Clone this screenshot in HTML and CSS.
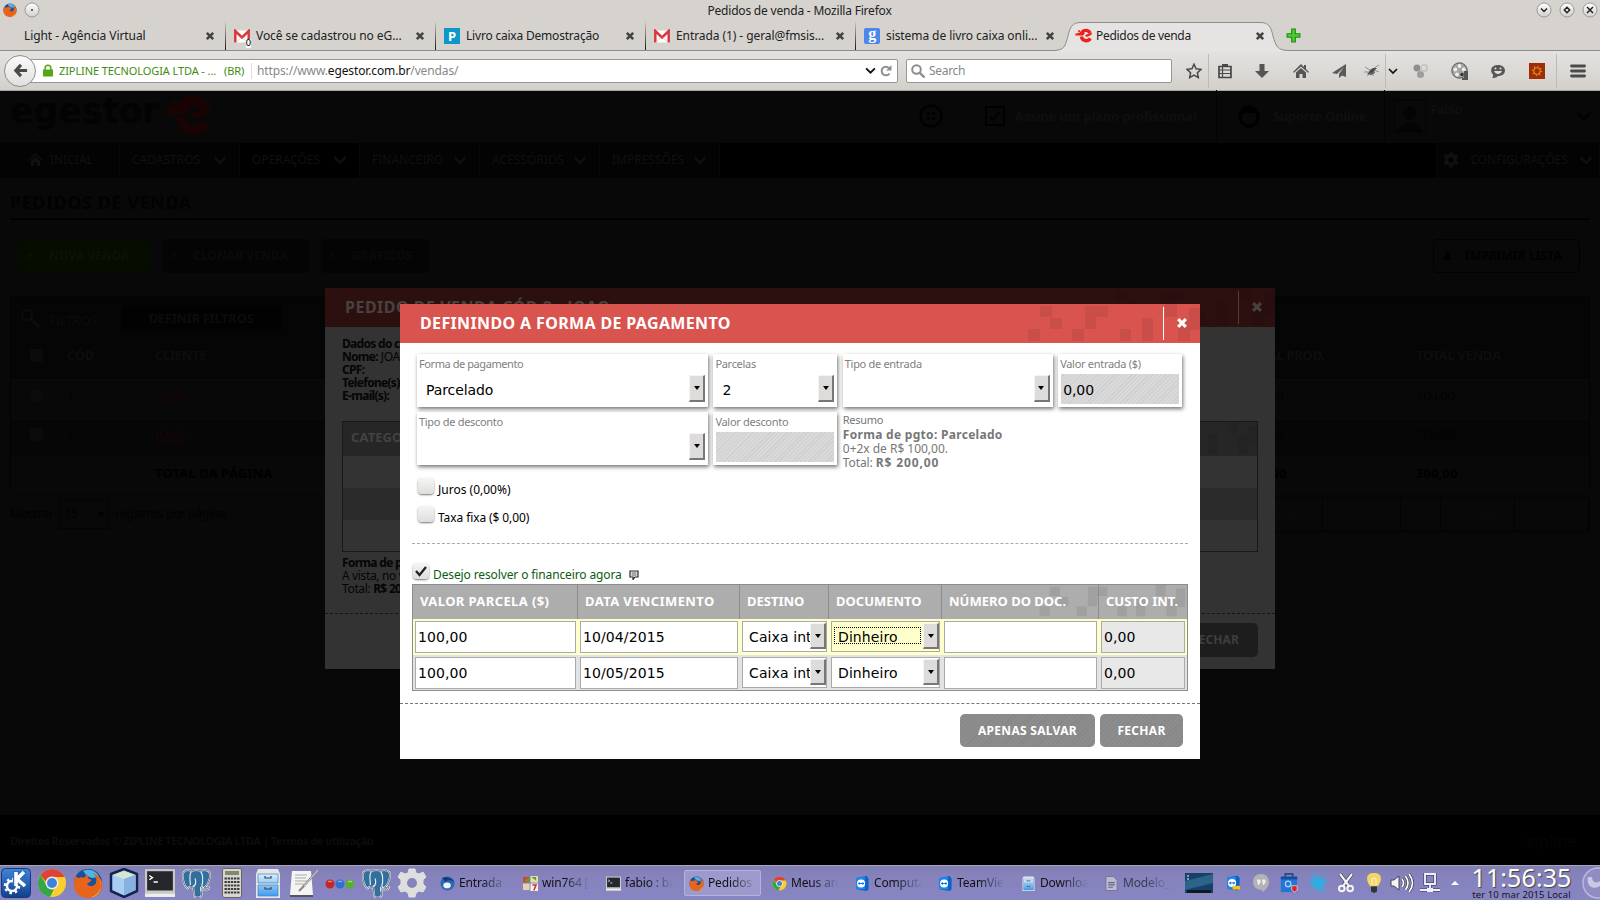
FILE: index.html
```html
<!DOCTYPE html>
<html lang="pt-BR">
<head>
<meta charset="utf-8">
<title>Pedidos de venda</title>
<link rel="stylesheet" href="styles.css">
</head>
<body>
<svg class="defs" aria-hidden="true">
  <linearGradient id="gb" x1="0" y1="0" x2="0" y2="1"><stop offset="0" stop-color="#fff"/><stop offset="1" stop-color="#d2cfcc"/></linearGradient>
  <linearGradient id="gblue" x1="0" y1="0" x2="0" y2="1"><stop offset="0" stop-color="#3f86d8"/><stop offset="1" stop-color="#123f8c"/></linearGradient>
  <linearGradient id="gsky" x1="0" y1="0" x2="0" y2="1"><stop offset="0" stop-color="#d6efff"/><stop offset="1" stop-color="#3f9cf0"/></linearGradient>
  <symbol id="x" viewBox="0 0 10 10"><path d="M1.8 1.8l6.4 6.4M8.2 1.8L1.8 8.2" stroke="currentColor" stroke-width="2.6"/></symbol>
  <symbol id="chev" viewBox="0 0 10 10"><path d="M1 3l4 4 4-4" fill="none" stroke="currentColor" stroke-width="1.7"/></symbol>
  <symbol id="gmail" viewBox="0 0 16 13"><path d="M0 1h16v12H0z" fill="#fff"/><path d="M1.3 13V1.5L8 8l6.700-6.500V13" fill="none" stroke="#d8393f" stroke-width="2.500"/><path d="M3 12l4-4M13 12L9 8" stroke="#e9b4b4" stroke-width=".8"/></symbol>
  <symbol id="fox" viewBox="0 0 30 30"><circle cx="15" cy="15" r="14" fill="#1c4f9c"/><path d="M10 3c6-3 14 0 16 6l-7 1-5-2z" fill="#4fb4e6"/><path d="M2 7c1 2 2 3 4 3 2-1 4-1 5 0 1-2 2-3 4-4-1 2 0 4 1 5 2 0 3 1 2 2l-4 3c2 3 7 3 9-1 1-4 0-7-3-10 7 3 10 8 9 14-1 7-7 11-14 11C6 30 0 23 1 15z" fill="#e8641b"/><path d="M26 9c4 8 1 18-8 20 8 0 12-8 8-20z" fill="#fbbf2d"/></symbol>
  <symbol id="chrome" viewBox="0 0 30 30"><circle cx="15" cy="15" r="14" fill="#f9cf2e"/><path d="M15 1a14 14 0 0 1 12.500 8H15a6 6 0 0 0-6 5L3.500 7A14 14 0 0 1 15 1z" fill="#dd4337"/><path d="M3.500 7L10 18a6 6 0 0 0 7 3l-4 8A14 14 0 0 1 3.500 7z" fill="#35a64b"/><circle cx="15" cy="15" r="6.500" fill="#eee"/><circle cx="15" cy="15" r="5" fill="#3f82d6"/></symbol>
  <symbol id="pg" viewBox="0 0 32 32"><path d="M2 9C1 3 6 1 11 3c4-1 7-1 10 0 5-2 11 0 10 6-1 5-3 10-6 12l5 0c-1 3-5 3-8 2v6c-1 3-7 4-8 0l-1-9c-1 1-3 1-4 0l-2 2C4 20 2 14 2 9z" fill="#336f9e" stroke="#fff" stroke-width="1.800"/><path d="M2 9C1 3 6 1 11 3c4-1 7-1 10 0 5-2 11 0 10 6-1 5-3 10-6 12l5 0c-1 3-5 3-8 2v6c-1 3-7 4-8 0l-1-9c-1 1-3 1-4 0l-2 2C4 20 2 14 2 9z" fill="none" stroke="#1d2a3c" stroke-width=".7"/><path d="M11 4c-3 4-1 8-1 14M21 4c3 3 2 8 2 12-1 2-1 4 1 5M13 20c3-2 3-6 2-9M21 20v5" fill="none" stroke="#e8f0f6" stroke-width="1.200"/></symbol>
  <symbol id="term" viewBox="0 0 28 28"><path d="M0 1h28v26H0z" fill="#c9c9c5"/><path d="M2 3h24v18H2z" fill="#25282a"/><path d="M4 7l3 2-3 2M8 13h4" fill="none" stroke="#fff" stroke-width="1.300"/><path d="M0 24h28v3H0z" fill="#eee"/></symbol>
  <symbol id="drawer" viewBox="0 0 24 30"><path d="M2 1h20l2 5v24H0V6z" fill="#e4e6e8"/><path d="M2 6h20v9H2zM2 17h20v11H2z" fill="url(#gsky)" stroke="#4b7fb0" stroke-width=".7"/><path d="M9 8v2h6V8M9 19v2h6v-2" fill="none" stroke="#345" stroke-width="1.200"/></symbol>
  <symbol id="tv" viewBox="0 0 15 16"><path d="M1 2l11-2 2 3v11l-2 2-11-2z" fill="#0d62c8"/><path d="M1 2l9-1v13l-9 0z" fill="#1c8cf0"/><circle cx="6" cy="8" r="4.300" fill="#fff"/><path d="M2.500 8l2-1.800v1.200h3V6.200L9.500 8l-2 1.800V8.600h-3v1.200z" fill="#0d72d8"/></symbol>
  <symbol id="egs" viewBox="0 0 48 40"><path d="M42.500 13A13.500 13.500 0 0 0 19 12l6 5M18 23a13.500 13.500 0 0 0 25 5" fill="none" stroke="currentColor" stroke-width="9.500"/><path d="M28 19l19-8v7l-14 6z" fill="currentColor"/><path d="M1 14h6v6H1zM9 5h5v5H9zM7 12h13v8H7z" fill="currentColor"/></symbol>
  <symbol id="gear" viewBox="0 0 30 30"><path d="M12 1h6l1 4 3 1 4-2 3 5-3 3v4l3 3-3 5-4-1-3 2-1 4h-6l-1-4-3-2-4 1-3-5 3-3v-4L1 9l3-5 4 2 3-1z" fill="currentColor" stroke="currentColor" stroke-linejoin="round"/><circle cx="15" cy="15" r="5" fill="var(--hole)"/></symbol>
  <symbol id="pix" viewBox="0 0 180 39"><g fill="#000" fill-opacity=".07"><path d="M8 25h12v12H8zM20 2h12v11H20zM30 14h12v11H30zM52 25h12v12H52zM65 2h11v23H65zM76 2h12v11H76zM100 25h11v12h-11zM122 14h11v23h-11zM122 25h11v12h-11zM145 0h12v13h-12zM158 16h12v21h-12zM169 4h11v22h-11z"/></g></symbol>
</svg>

<header class="titlebar">
  <svg class="i14"><use href="#fox"/></svg>
  <svg class="winbtn wb-left" viewBox="0 0 16 16"><circle cx="8" cy="8" r="7" fill="url(#gb)" stroke="#999"/><circle cx="8" cy="8" r="1" fill="#333"/></svg>
  <span class="wtitle">Pedidos de venda - Mozilla Firefox</span>
  <span class="winbtns">
    <svg class="winbtn" viewBox="0 0 16 16"><circle cx="8" cy="8" r="7" fill="url(#gb)" stroke="#999"/><path d="M5 6.500l3 3 3-3" fill="none" stroke="#222" stroke-width="1.500"/></svg>
    <svg class="winbtn" viewBox="0 0 16 16"><circle cx="8" cy="8" r="7" fill="url(#gb)" stroke="#999"/><path d="M8 5.300L10.700 8 8 10.700 5.300 8z" fill="none" stroke="#222" stroke-width="1.500"/></svg>
    <svg class="winbtn" viewBox="0 0 16 16"><circle cx="8" cy="8" r="7" fill="url(#gb)" stroke="#999"/><path d="M5 5l6 6M11 5l-6 6" stroke="#222" stroke-width="1.500"/></svg>
  </span>
</header>

<nav class="tabs">
  <div class="tab first"><span class="tt">Light - Agência Virtual</span><svg class="close"><use href="#x"/></svg></div>
  <div class="tab"><span class="fav"><svg class="gm"><use href="#gmail"/></svg><b class="zero">0</b></span><span class="tt">Você se cadastrou no eG...</span><svg class="close"><use href="#x"/></svg></div>
  <div class="tab"><span class="fav favp">P</span><span class="tt t3">Livro caixa Demostração</span><svg class="close"><use href="#x"/></svg></div>
  <div class="tab"><span class="fav"><svg class="gm"><use href="#gmail"/></svg></span><span class="tt">Entrada (1) - geral@fmsis...</span><svg class="close"><use href="#x"/></svg></div>
  <div class="tab"><span class="fav favg">g</span><span class="tt">sistema de livro caixa onli...</span><svg class="close"><use href="#x"/></svg></div>
  <div class="active-tab">
    <svg class="tabshape" viewBox="0 0 236 30"><path d="M0 30V28.500C12 28.500 12 24 15 14 17 5 19 .5 28 .5H207C216 .5 218 5 220 14 223 24 224 28.500 236 28.500V30z" fill="#e6e4e2"/><path d="M0 28.500C12 28.500 12 24 15 14 17 5 19 .5 28 .5H207C216 .5 218 5 220 14 223 24 224 28.500 236 28.500" fill="none" stroke="#8f8d8a"/></svg>
    <svg class="favegs"><use href="#egs"/></svg><span class="tt t6">Pedidos de venda</span><svg class="close"><use href="#x"/></svg>
  </div>
  <svg class="plus" viewBox="0 0 14 14"><path d="M5.300 1h3.400v4.300H13v3.400H8.700V13H5.300V8.700H1V5.300h4.300z" fill="#4ccb2c" stroke="#1f8a12"/></svg>
</nav>

<div class="navbar">
  <div class="back"><svg viewBox="0 0 16 16"><path d="M8.500 2L3 8l5.500 6M3 8h12" fill="none" stroke="#4a4a48" stroke-width="3.300"/></svg></div>
  <div class="url">
    <svg class="lock" viewBox="0 0 10 12"><path d="M0 5h10v7H0z" fill="#58a618"/><path d="M2.200 5.500V3.500a2.800 2.800 0 0 1 5.600 0v2" fill="none" stroke="#58a618" stroke-width="1.600"/></svg>
    <span class="ev">ZIPLINE TECNOLOGIA LTDA - ...</span><span class="br">(BR)</span>
    <span class="addr">https://www.<b>egestor.com.br</b>/vendas/</span>
    <svg class="i11"><use href="#chev"/></svg>
    <svg class="reload" viewBox="0 0 12 12"><path d="M9.500 8.500A4.300 4.300 0 1 1 9 3" fill="none" stroke="#8b9094" stroke-width="2"/><path d="M11.500 0v5.500H6z" fill="#8b9094"/></svg>
  </div>
  <div class="search"><svg viewBox="0 0 14 14"><circle cx="5.500" cy="5.500" r="4.300" fill="none" stroke="#8d8d8d" stroke-width="2"/><path d="M8.500 8.500l5 5" stroke="#8d8d8d" stroke-width="2.400"/></svg><span>Search</span></div>
  <div class="tools">
    <i class="c1"><svg viewBox="0 0 16 16"><path d="M8 1.200l2.100 4.500 4.900.6-3.600 3.400.9 4.900L8 12.200l-4.300 2.400.9-4.900L1 6.300l4.900-.6z" fill="none" stroke="#484846" stroke-width="1.500"/></svg></i>
    <i class="c2"><svg viewBox="0 0 16 16"><path d="M2 3.500h12v11H2z" fill="none" stroke="#484846" stroke-width="1.700"/><path d="M5 1h6v3H5z" fill="#484846"/><path d="M2 7h12M2 10.500h12M5.500 4v10" stroke="#484846" stroke-width="1.200"/></svg></i>
    <i class="c3"><svg viewBox="0 0 16 16"><path d="M5.500 1h5v7H15l-7 7-7-7h4.500z" fill="#555553"/></svg></i>
    <i class="c3"><svg viewBox="0 0 16 16"><path d="M0 9l8-8 3 3V2h2v4l3 3-1 .8L8 3.400 1 9.800z" fill="#555553"/><path d="M3 9.500l5-4.500 5 4.500V15h-3.500v-4h-3v4H3z" fill="#555553"/></svg></i>
    <i class="c3"><svg viewBox="0 0 16 16"><path d="M15 1v13l-4-1.500L8 15v-4l5-7-7 7-5-1z" fill="#5a5a58"/></svg></i>
    <i class="c4"><svg viewBox="0 0 16 16"><path d="M6 7l3-2 4 0-3 3 1 2-4 2-4-1 2-2z" fill="#4a4a4a"/><path d="M1 4l5 3M0 9h5M3 13l4-3M9 13V9M15 9l-5-2M15 2l-5 3" stroke="#888" stroke-width=".9"/></svg></i>
    <i class="c5"><svg class="i10"><use href="#chev"/></svg></i>
    <i class="c6"><svg viewBox="0 0 16 16"><circle cx="5" cy="5" r="3.500" fill="#8e8e8e"/><circle cx="8.500" cy="11.500" r="3.500" fill="#9c9c9c"/><circle cx="12" cy="5" r="3.200" fill="none" stroke="#c2c2c2" stroke-width="1.600"/></svg></i>
    <i class="c3"><svg class="i18" viewBox="0 0 18 18"><circle cx="8.500" cy="8.500" r="7.700" fill="#a4a4a4" stroke="#555"/><circle cx="8.500" cy="4" r="1.900" fill="#eee"/><circle cx="4.300" cy="7.500" r="1.900" fill="#eee"/><circle cx="12.700" cy="7.500" r="1.900" fill="#eee"/><circle cx="6" cy="12.500" r="1.900" fill="#eee"/><circle cx="11" cy="12.500" r="1.700" fill="#333"/><path d="M13 9h4v9h-6v-2h2z" fill="#555"/></svg></i>
    <i class="c3"><svg viewBox="0 0 16 16"><path d="M8 2c4.500 0 7 2.500 7 5.500S12.500 13 8 13c-2 2-4 2-6 2 1-1 1.300-2 1-3.500C0 9 0 2 8 2z" fill="#565656"/><path d="M4 8c1.500 4 6.500 4 8 0z" fill="#e0dedc"/><circle cx="5.500" cy="5.500" r="1" fill="#e0dedc"/><circle cx="10.500" cy="5.500" r="1" fill="#e0dedc"/></svg></i>
    <i class="c3"><svg viewBox="0 0 16 16"><path d="M0 0h16v16H0z" fill="#9c2e08"/><circle cx="8" cy="8" r="3.200" fill="none" stroke="#f0951c" stroke-width="1.100"/><circle cx="8" cy="8" r="4.600" fill="none" stroke="#f0951c" stroke-width="1.200" stroke-dasharray="1 2.610"/></svg></i>
    <i class="c7"><svg viewBox="0 0 16 14"><path d="M1.500 2h13M1.500 7h13M1.500 12h13" stroke="#4a4a48" stroke-width="2.800" stroke-linecap="round"/></svg></i>
  </div>
</div>

<main class="page">
  <div class="hd">
    <span class="logo">egestor</span><svg class="logoe"><use href="#egs"/></svg>
    <svg class="hface" viewBox="0 0 24 24"><circle cx="12" cy="12" r="10.500" fill="none" stroke="#000" stroke-width="2"/><path d="M8 8h3v3H8zM13 8h3v3h-3zM8 13h3v3H8zM13 13h3v3h-3z" fill="#000"/></svg>
    <svg class="hcheck" viewBox="0 0 20 20"><path d="M1 1h18v18H1z" fill="none" stroke="#000" stroke-width="2"/><path d="M5 10l3 4 7-8" fill="none" stroke="#000" stroke-width="2"/></svg>
    <span class="hplan">Assine um plano profissional</span>
    <span class="hsup"><svg viewBox="0 0 24 24"><circle cx="12" cy="13" r="9" fill="none" stroke="#000" stroke-width="3"/><path d="M3 11C4-2 20-2 21 11l-5-2-8 0zM8 20h8v4H8z" fill="#000"/></svg>Suporte Online</span>
    <span class="huser"><svg viewBox="0 0 34 34"><path d="M.5.5h33v33H.5z" fill="#090909" stroke="#040404"/><circle cx="17" cy="14" r="7" fill="#040404"/><path d="M4 33c2-12 24-12 26 0z" fill="#040404"/></svg><em>Fabio</em><svg class="hv"><use href="#chev"/></svg></span>
  </div>
  <div class="menu">
    <span class="m0"><svg viewBox="0 0 16 16"><path d="M0 8.500L8 1l8 7.500-1.200 1L8 3.500 1.200 9.500zM3 9.500L8 5l5 4.500V15H9.500v-4h-3v4H3z" fill="currentColor"/></svg>INICIAL</span>
    <span>CADASTROS<svg><use href="#chev"/></svg></span><span class="on">OPERAÇÕES<svg><use href="#chev"/></svg></span><span>FINANCEIRO<svg><use href="#chev"/></svg></span><span>ACESSÓRIOS<svg><use href="#chev"/></svg></span><span class="last">IMPRESSÕES<svg><use href="#chev"/></svg></span>
    <span class="cfg"><svg class="g"><use href="#gear"/></svg>CONFIGURAÇÕES<svg><use href="#chev"/></svg></span>
  </div>
  <div class="content">
    <h1>PEDIDOS DE VENDA</h1>
    <div class="btns"><span class="b nova">+ <u>NOVA VENDA</u></span><span class="b clon">× <u>CLONAR VENDA</u></span><span class="b graf">× <u>GRÁFICOS</u></span><span class="b impr">♟ <u>IMPRIMIR LISTA</u></span></div>
    <div class="grid">
      <div class="filt"><svg viewBox="0 0 20 20"><circle cx="7" cy="7" r="5" fill="none" stroke="#0d0d0d" stroke-width="2"/><path d="M11 11l8 8" stroke="#0d0d0d" stroke-width="3"/></svg><span>FILTROS:</span><b>DEFINIR FILTROS</b></div>
      <div class="gr gh"><i></i><span>CÓD</span><span>CLIENTE</span><span class="p">TOTAL PROD.</span><span>TOTAL VENDA</span></div>
      <div class="gr"><i></i><span>1</span><span class="lk">JOAO</span><span class="p">100,00</span><span>100,00</span></div>
      <div class="gr r2"><i></i><span>2</span><span class="lk">JOAO</span><span class="p">200,00</span><span>200,00</span></div>
      <div class="gr tot"><i class="n"></i><span></span><span>TOTAL DA PÁGINA</span><span class="p">300,00</span><span>300,00</span></div>
    </div>
    <div class="pager"><span>Mostrar</span><span class="psel">15 <s>▾</s></span><span>registros por página</span><div class="pages"><span>« Primeira</span><span>‹ Anterior</span><span>1</span><span>Próxima ›</span><span>Última »</span></div></div>
  </div>
  <footer class="foot"><span>Direitos Reservados © ZIPLINE TECNOLOGIA LTDA | Termos de utilização</span><em>zipline</em></footer>

  <section class="dlg dlg-back">
    <div class="dh"><h2>PEDIDO DE VENDA CÓD 2 - JOAO</h2><svg class="pix"><use href="#pix"/></svg><span class="dx"><svg><use href="#x"/></svg></span></div>
    <div class="info"><b>Dados do cliente</b><br><b>Nome:</b> JOAO<br><b>CPF:</b><br><b>Telefone(s):</b><br><b>E-mail(s):</b></div>
    <div class="bt"><div class="bth">CATEGORIA<svg class="pix"><use href="#pix"/></svg></div><div></div><div class="alt"></div><div></div></div>
    <div class="info info2"><b>Forma de pgto: A vista</b><br>A vista, no valor de R$ 200,00<br>Total: <b>R$ 200,00</b></div>
    <div class="bfoot"><span>FECHAR</span></div>
  </section>

  <section class="dlg dlg-main">
    <div class="dh"><h2>DEFININDO A FORMA DE PAGAMENTO</h2><svg class="pix"><use href="#pix"/></svg><span class="dx"><svg><use href="#x"/></svg></span></div>
    <div class="fields">
      <div class="f"><label>Forma de pagamento</label><div class="v">Parcelado<i class="dd"></i></div></div>
      <div class="f"><label>Parcelas</label><div class="v">2<i class="dd"></i></div></div>
      <div class="f"><label>Tipo de entrada</label><div class="v"><i class="dd"></i></div></div>
      <div class="f"><label>Valor entrada ($)</label><div class="v off">0,00</div></div>
      <div class="f"><label>Tipo de desconto</label><div class="v"><i class="dd"></i></div></div>
      <div class="f"><label>Valor desconto</label><div class="v off"></div></div>
      <div class="sum"><p class="s1">Resumo</p><p><b>Forma de pgto: Parcelado</b></p><p class="s3">0+2x de R$ 100,00.</p><p class="s4">Total: <b>R$ 200,00</b></p></div>
    </div>
    <div class="chk"><i class="cb"></i><span>Juros (0,00%)</span></div>
    <div class="chk"><i class="cb"></i><span>Taxa fixa ($ 0,00)</span></div>
    <div class="dash"></div>
    <div class="chk green"><i class="cb"><svg viewBox="0 0 16 16"><path d="M3 8l3.500 4L13 4" fill="none" stroke="#222" stroke-width="2.300"/></svg></i><span>Desejo resolver o financeiro agora</span><svg class="note" viewBox="0 0 10 10"><path d="M1 1h8v6H6L4 9.500V7H1z" fill="#fff" stroke="#222" stroke-width="1.200"/><path d="M2.500 3h5M2.500 5h5" stroke="#222" stroke-width=".8"/></svg></div>
    <div class="tb">
      <div class="tr th"><svg class="pix"><use href="#pix"/></svg><span class="wide">VALOR PARCELA ($)</span><span class="wide">DATA VENCIMENTO</span><span>DESTINO</span><span>DOCUMENTO</span><span>NÚMERO DO DOC.</span><span>CUSTO INT.</span></div>
      <div class="tr y"><div class="in">100,00</div><div class="in">10/04/2015</div><div class="in se"><em>Caixa interno</em><i class="dd"></i></div><div class="in se foc"><em>Dinheiro</em><i class="dd"></i></div><div class="in"></div><div class="in ro">0,00</div></div>
      <div class="tr"><div class="in">100,00</div><div class="in">10/05/2015</div><div class="in se"><em>Caixa interno</em><i class="dd"></i></div><div class="in se"><em>Dinheiro</em><i class="dd"></i></div><div class="in"></div><div class="in ro">0,00</div></div>
    </div>
    <div class="acts"><span class="a1">APENAS SALVAR</span><span class="a2">FECHAR</span></div>
  </section>
</main>

<div class="taskbar">
  <div class="launch">
    <svg viewBox="0 0 30 30"><rect x=".5" y=".5" width="29" height="29" rx="4" fill="url(#gblue)" stroke="#123a80"/><circle cx="11" cy="18" r="5" fill="none" stroke="#fff" stroke-width="2.500"/><circle cx="11" cy="18" r="7" fill="none" stroke="#fff" stroke-width="2.500" stroke-dasharray="2.500 3"/><path d="M12 3h13v14H12z" fill="#2c6cbd"/><path d="M15 4v14M23 4l-7 7 8 7" fill="none" stroke="#fff" stroke-width="3.600"/></svg>
    <svg><use href="#chrome"/></svg>
    <svg><use href="#fox"/></svg>
    <svg viewBox="0 0 30 30"><path d="M15 1l13 5v17l-13 6L2 23V6z" fill="#a9cdf2" stroke="#14244f" stroke-width="2.500" stroke-linejoin="round"/><path d="M15 11L4 7l11-4 11 4z" fill="#d4e8d0"/><path d="M15 11l11-4v15l-11 5z" fill="#86b1e0"/></svg>
    <svg viewBox="0 0 28 28"><use href="#term"/></svg>
    <svg><use href="#pg"/></svg>
    <svg viewBox="0 0 30 30"><rect x="5.500" y=".5" width="19" height="29" rx="1.500" fill="#d8d6cf" stroke="#66665f"/><path d="M8 3h14v4H8z" fill="#7d8a6c"/><path d="M7.500 10.500h15M7.500 14h15M7.500 17.500h15M7.500 21h15M7.500 24.500h15" stroke="#3c3c3c" stroke-width="2.200" stroke-dasharray="2.400 .75"/></svg>
    <svg><use href="#drawer"/></svg>
    <svg viewBox="0 0 30 30"><path d="M3 3h19l2 24H1z" fill="#f4f4f2"/><path d="M1 27h23v2H1z" fill="#555"/><path d="M6 7h12M6 10h11M6 13h13M6 16h9" stroke="#aaa"/><path d="M29 2L13 20l-3 3" stroke="#8a8a8a" stroke-width="2.200"/><path d="M29 2L15 18" stroke="#eee" stroke-width=".8"/></svg>
    <svg viewBox="0 0 30 30"><circle cx="5" cy="16" r="4.500" fill="#c62626"/><circle cx="15" cy="16" r="4.500" fill="#2f6fd0"/><circle cx="25" cy="16" r="4.500" fill="#58b02c"/><path d="M3 14q2-2 4 0M13 14q2-2 4 0M23 14q2-2 4 0" stroke="#fff" stroke-opacity=".6" fill="none"/></svg>
    <svg><use href="#pg"/></svg>
    <svg class="lg"><use href="#gear"/></svg>
  </div>
  <div class="tasks">
    <span><svg viewBox="0 0 16 16"><circle cx="8" cy="8" r="7.500" fill="#2b69b5"/><path d="M2 2c6-2 12 1 13 5-3-3-6-3-9-1z" fill="#12397a"/><ellipse cx="7.500" cy="10" rx="4" ry="3" fill="#f2f2f2"/></svg><em>Entrada -</em></span>
    <span><svg viewBox="0 0 16 16"><path d="M0 1h7v6H0z" fill="#d8472c"/><path d="M8 0h8v7H8z" fill="#eadfa0"/><path d="M0 8h7v7H0z" fill="#e5d3b0"/><path d="M8 8h8v8H8z" fill="#f6f4e8"/><path d="M2 5l5-4v6zM9 1h5v4z" fill="#49a843"/><path d="M10 9.500h4l-2.500 6" fill="none" stroke="#c33" stroke-width="1.600"/></svg><em>win764 [</em></span>
    <span><svg><use href="#term"/></svg><em>fabio : ba</em></span>
    <span class="cur"><svg><use href="#fox"/></svg><em>Pedidos</em></span>
    <span><svg><use href="#chrome"/></svg><em>Meus arq</em></span>
    <span><svg><use href="#tv"/></svg><em>Computa</em></span>
    <span><svg><use href="#tv"/></svg><em>TeamVie</em></span>
    <span><svg><use href="#drawer"/></svg><em>Downloa</em></span>
    <span class="dim"><svg viewBox="0 0 14 16"><path d="M1 .5h8l4 4v11H1z" fill="#d8d8e4" stroke="#666a80"/><path d="M3.500 7h7M3.500 9.500h7M3.500 12h5" stroke="#555" stroke-width="1.200"/></svg><em>Modelo_</em></span>
  </div>
  <div class="tray">
    <svg class="pg" viewBox="0 0 28 20"><path d="M0 0h28v20H0z" fill="#15406c"/><path d="M0 8L28 1v9L0 17z" fill="#2c6488"/><path d="M2 17h24v3H2z" fill="#111820"/><path d="M2 3h2M2 6h2" stroke="#fff"/></svg>
    <span><svg class="s16" viewBox="0 0 16 16"><use href="#tv"/><path d="M7 11h8v4H7z" fill="#f2c21c"/></svg></span>
    <span><svg viewBox="0 0 20 20"><path d="M10 1c5 0 8 3.500 8 8 0 5-4 8-7 10.500V17C6 17 2 14 2 9s3-8 8-8z" fill="#b4b2b4"/><path d="M6 7h3v3l-2 2M11 7h3v3l-2 2" fill="#eee" stroke="#eee"/></svg></span>
    <span><svg viewBox="0 0 20 22"><path d="M6 5V1h8v4" fill="none" stroke="#274b80" stroke-width="2"/><path d="M1 4h18v17H1z" fill="#2277d4"/><path d="M1 4h18v3H1z" fill="#174c98"/><circle cx="9" cy="12" r="3" fill="none" stroke="#a9d4ff" stroke-width="1.400"/><path d="M13 14h6v5l-3 2-3-2z" fill="#d22" stroke="#fff" stroke-width=".7"/></svg></span>
    <span><svg viewBox="0 0 20 20"><circle cx="10" cy="10" r="5.500" fill="#2ab0e0"/><path d="M10 0v20M0 9h20M2 2l16 16M18 2L2 17M6 0l8 20" stroke="#2ab0e0" stroke-width="1.300"/></svg></span>
    <span><svg viewBox="0 0 16 20"><path d="M2 1l9 12M14 1L5 13" stroke="#333" stroke-width="3.400"/><path d="M2 1l9 12M14 1L5 13" stroke="#f4f4f4" stroke-width="2.200"/><circle cx="3.800" cy="15.500" r="2.800" fill="none" stroke="#f4f4f4" stroke-width="2"/><circle cx="12.200" cy="15.500" r="2.800" fill="none" stroke="#f4f4f4" stroke-width="2"/></svg></span>
    <span><svg viewBox="0 0 14 20"><path d="M7 0c9 0 8 8 4 13H3C-1 8-2 0 7 0z" fill="#f2d566"/><path d="M5 12V6l2-1 2 1v6" fill="none" stroke="#fff8d8"/><path d="M4 13.500h6v5L7 20l-3-1.500z" fill="#333"/></svg></span>
    <span><svg class="s24" viewBox="0 0 24 22"><path d="M1 8h3l5-4v14l-5-4H1z" fill="#f4f4f4" stroke="#445"/><path d="M12 7q3 4 0 8M15.500 4q5 7 0 14M19 2q7 9 0 18" fill="none" stroke="#334" stroke-width="2.800"/><path d="M12 7q3 4 0 8M15.500 4q5 7 0 14M19 2q7 9 0 18" fill="none" stroke="#fff" stroke-width="1.700"/></svg></span>
    <span><svg viewBox="0 0 20 20"><path d="M5 1h10v10H5zM10 11v5M0 17h20" fill="none" stroke="#334" stroke-width="3"/><path d="M5 1h10v10H5zM10 11v5M0 17h20" fill="none" stroke="#eef" stroke-width="1.900"/><path d="M7 15h6v4H7z" fill="#eef"/></svg></span>
    <span class="up"><svg viewBox="0 0 8 6"><path d="M0 5l4-4 4 4z" fill="#fff"/></svg></span>
  </div>
  <div class="clock"><div>11:56:35</div><p>ter 10 mar 2015 Local</p></div>
  <svg class="cashew" viewBox="0 0 20 34"><circle cx="18" cy="17" r="15" fill="#8f8dc2" stroke="#b9b8dc" stroke-width="1.500"/><path d="M8 11c-2 8 4 14 12 9v-5c-4 3-8 1-8-4z" fill="#c9c8e2"/></svg>
</div>
</body>
</html>
```
FILE: styles.css
```css
* { box-sizing: border-box; }
body { margin: 0; width: 1600px; height: 900px; overflow: hidden; display: flex; flex-direction: column; font: 12px/16px "Noto Sans", "Open Sans", sans-serif; letter-spacing: -.3px; color: #111; background: #d6d3cf; }
svg { display: block; flex: none; }
i, em { font-style: normal; }
p, h1, h2 { margin: 0; }
.defs { position: absolute; width: 0; height: 0; }

/* window title */
.titlebar { height: 21px; flex: none; display: flex; align-items: center; padding: 0 2px 2px 3px; }
.i14 { width: 14px; height: 14px; }
.winbtn { width: 16px; height: 16px; }
.wb-left { margin-left: 7px; }
.wtitle { flex: 1; text-align: center; padding-left: 23px; color: #222; padding-top: 3px; letter-spacing: -.2px; }
.winbtns { display: flex; gap: 7px; }

/* tabs */
.tabs { height: 30px; flex: none; display: flex; align-items: center; border-bottom: 1px solid #8f8d8a; background: #d6d3cf; }
.tab { width: 210px; height: 29px; display: flex; align-items: center; padding: 0 10px 0 8px; border-right: 1px solid; border-image: linear-gradient(#d6d3cf, #111) 1; }
.tab.first { width: 226px; padding-left: 24px; }
.tab:nth-child(5) { border-right: 0; width: 205px; padding-right: 6px; }
.tt { flex: 1; white-space: nowrap; letter-spacing: -.08px; color: #222; }
.t3 { letter-spacing: -.2px; }
.t6 { letter-spacing: -.3px; }
.close { width: 10px; height: 10px; color: #444; }
.fav { width: 16px; height: 16px; margin-right: 6px; position: relative; flex: none; }
.gm { width: 16px; height: 14px; margin-top: 1px; }
.zero { position: absolute; right: -1px; bottom: -4px; font: 9px/9px "DejaVu Sans", sans-serif; background: #fff; color: #000; }
.favp { background: #0d98c9; color: #fff; font-weight: 700; font-size: 13px; text-align: center; }
.favg { background: #4a86ec; color: #fff; font: bold 16px/12px "Liberation Serif", serif; text-align: center; border-radius: 2px; }
.active-tab { position: relative; width: 222px; height: 30px; display: flex; align-items: center; padding: 0 18px 0 14px; margin-right: 3px; }
.tabshape { position: absolute; left: -8px; top: 1px; width: 236px; height: 30px; }
.active-tab > :not(.tabshape) { position: relative; }
.favegs { width: 17px; height: 15px; margin-right: 4px; color: #f0201c; }
.plus { width: 15px; height: 15px; }

/* toolbar */
.navbar { height: 40px; flex: none; display: flex; align-items: center; background: linear-gradient(#e4e2e0, #d3d0cc); border-bottom: 1px solid #aaa7a3; }
.back { z-index: 1; margin: 0 -16px 0 4px; width: 32px; height: 32px; border: 1px solid #918f8c; border-radius: 50%; background: linear-gradient(#fafafa, #e2e0de); display: grid; place-items: center; }
.back svg { width: 15px; height: 15px; }
.url { width: 878px; height: 24px; background: #fff; border: 1px solid #99968f; border-radius: 2px; display: flex; align-items: center; padding: 0 5px 0 22px; flex: none; }
.lock { width: 10px; height: 13px; margin-right: 6px; }
.ev, .br { color: #418c0c; font-size: 11px; width: 165px; white-space: nowrap; letter-spacing: -.1px; }
.br { width: 28px; border-right: 1px solid #ddd; }
.addr { flex: 1; margin-left: 5px; color: #888; letter-spacing: -.13px; }
.addr b { font-weight: 400; color: #111; }
.i11 { width: 11px; height: 11px; margin-right: 4px; }
.reload { width: 12px; height: 12px; }
.search { width: 266px; height: 24px; margin-left: 8px; background: #fff; border: 1px solid #99968f; border-radius: 2px; display: flex; align-items: center; gap: 4px; padding-left: 4px; color: #888; flex: none; }
.search svg { width: 14px; height: 14px; }
.tools { display: flex; height: 34px; flex: 1; }
.tools i { display: grid; place-items: center; width: 38.500px; flex: none; }
.tools svg { width: 16px; height: 16px; }
.tools .i10 { width: 10px; height: 10px; }
.tools .i18 { width: 18px; height: 18px; }
.tools .c1 { width: 37px; border-right: 1px solid #bdbab6; padding-left: 7px; }
.tools .c2 { width: 34px; padding-right: 2px; }
.tools .c4 { width: 27px; border-right: 1px solid #bdbab6; }
.tools .c5 { width: 14px; }
.tools .c6 { width: 41px; }
.tools .c7 { width: 43px; border-left: 1px solid #bdbab6; }

/* page below the overlay */
.page { position: relative; flex: 1; min-height: 0; background: #080808; display: flex; flex-direction: column; color: #0e0e0e; }
.hd { height: 52px; flex: none; display: flex; align-items: center; padding: 0 0 2px 10px; font-weight: 700; font-size: 13px; color: #0f0f0f; }
.logo { font: bold 35px/40px "DejaVu Sans", sans-serif; letter-spacing: -.3px; width: 153px; color: #030303; margin-top: -10px; }
.logoe { width: 48px; height: 40px; color: #1a0303; margin-top: -3px; }
.hface { width: 24px; height: 24px; margin-left: 708px; }
.hcheck { width: 20px; height: 20px; margin-left: 42px; }
.hplan { width: 200px; margin-left: 10px; letter-spacing: -.15px; white-space: nowrap; }
.hsup { height: 52px; width: 169px; border-left: 1px solid #030303; border-right: 1px solid #030303; display: flex; align-items: center; gap: 12px; padding-left: 20px; margin-left: 1px; white-space: nowrap; }
.hsup svg { width: 24px; height: 26px; }
.huser { flex: 1; display: flex; align-items: center; gap: 5px; padding: 0 8px 0 9px; }
.huser > svg:first-child { width: 32px; height: 36px; }
.huser em { flex: 1; margin-top: -12px; font-size: 12px; }
.hv { width: 16px; height: 16px; color: #020202; }
.menu { height: 35px; flex: none; background: #000; display: flex; color: #101010; }
.menu span { width: 120px; display: flex; align-items: center; justify-content: space-between; padding: 0 12px 2px; border-right: 1px solid #080808; background: #030303; letter-spacing: 0; }
.menu svg { width: 14px; height: 14px; }
.menu .m0 { justify-content: flex-start; gap: 7px; padding-left: 28px; }
.menu .m0 svg { width: 15px; height: 15px; }
.menu .on { background: #000; }
.menu .cfg { width: 164px; margin-left: auto; border-left: 1px solid #080808; padding: 0 6px 2px; letter-spacing: -.1px; --hole: #000; }
.menu .cfg .g { width: 16px; height: 16px; }
.content { flex: 1; padding: 0 10px; }
h1 { font-size: 18px; line-height: 28px; height: 42px; padding-top: 10px; border-bottom: 2px solid #010101; color: #020202; letter-spacing: .55px; }
.btns { display: flex; gap: 12px; padding: 19px 10px 0 8px; height: 76px; }
.b { height: 34px; border-radius: 4px; background: #040404; color: #0a0a0a; font-weight: 700; display: flex; align-items: center; gap: 16px; padding-left: 8px; width: 147px; letter-spacing: .1px; white-space: nowrap; }
.b u { text-decoration: none; }
.nova { width: 132px; background: #050c00; color: #0b1403; }
.graf { width: 108px; }
.impr { margin-left: auto; background: none; border: 1px solid #010101; color: #010101; gap: 12px; }
.grid { height: 194px; border: 1px solid #030303; color: #030303; font-size: 13px; }
.filt { height: 42px; background: #050505; display: flex; align-items: center; padding-left: 9px; color: #0c0c0c; }
.filt svg { width: 20px; height: 20px; }
.filt span { width: 72px; margin-left: 9px; padding-top: 4px; }
.filt b { background: #020202; width: 160px; line-height: 26px; text-align: center; }
.gr { height: 39px; display: grid; grid-template-columns: 56px 88px 1090px 171px 170px; align-items: center; border-bottom: 1px solid #0b0b0b; padding-bottom: 8px; }
.gr i { width: 13px; height: 13px; border-radius: 3px; background: #0b0b0b; margin-left: 19px; }
.gr i.n { visibility: hidden; }
.gh { background: #050505; color: #0d0d0d; font-weight: 700; height: 41px; }
.lk { color: #160404; text-decoration: underline; }
.r2 { background: #060606; }
.tot { color: #000; font-weight: 700; height: 32px; padding: 0 0 2px; letter-spacing: .15px; }
.pager { height: 42px; padding-top: 6px; display: flex; align-items: center; gap: 6px; font-size: 12px; color: #020202; letter-spacing: -.2px; }
.psel { width: 50px; height: 29px; border: 1px solid #030303; display: flex; align-items: center; justify-content: space-between; padding: 0 4px; }
.psel s { text-decoration: none; }
.pages { margin-left: auto; display: flex; border: 1px solid #030303; height: 35px; align-items: center; }
.pages span { width: 78px; border-right: 1px solid #030303; text-align: center; line-height: 33px; color: #0b0b0b; }
.pages span:nth-child(3) { width: 40px; }
.pages span:nth-child(n+4) { width: 74px; }
.foot { height: 50px; flex: none; background: #000; display: flex; align-items: center; justify-content: space-between; padding: 2px 24px 0 10px; font-size: 11px; font-weight: 700; color: #0c0c0c; letter-spacing: -.48px; }
.foot em { font-size: 16px; color: #020405; }

/* dialogs */
.dlg { position: absolute; }
.dh { height: 39px; display: flex; align-items: center; position: relative; }
.dh h2 { flex: 1; padding: 0 0 2px 20px; font: bold 16px/20px "Noto Sans", sans-serif; white-space: nowrap; letter-spacing: .36px; }
.dlg-back h2 { letter-spacing: .5px; }
.pix { position: absolute; right: 0; top: 0; width: 180px; height: 39px; }
.dx { width: 37px; height: 33px; border-left: 1px solid currentColor; display: grid; place-items: center; margin-top: -1px; position: relative; }
.dx svg { width: 12px; height: 12px; }
.dlg-back { left: 325px; top: 197px; width: 950px; height: 381px; background: #333; color: #050505; }
.dlg-back .dh { background: #2c1010; color: #4a4040; }
.info { padding: 10px 17px 0; height: 94px; line-height: 13px; letter-spacing: -.35px; }
.info b { letter-spacing: -.7px; }
.bt { margin: 0 17px; border: 1px solid #181818; height: 131px; display: grid; grid-template-rows: 34px 32px 32px 32px; }
.bth { background: #262626; color: #424242; font-weight: 700; font-size: 13px; line-height: 31px; padding-left: 8px; position: relative; letter-spacing: .1px; }
.bt .pix { height: 33px; width: 152px; }
.alt { background: #2b2b2b; }
.info2 { height: 61px; padding-top: 4px; }
.bfoot { border-top: 1px dashed #151515; padding: 9px 17px; display: flex; justify-content: flex-end; }
.bfoot span { width: 83px; line-height: 34px; border-radius: 5px; background: #1d1d1d; color: #3d3d3d; font-weight: 700; padding-left: 17px; letter-spacing: .1px; }

.dlg-main { left: 400px; top: 213px; width: 800px; height: 455px; background: #fff; color: #000; }
.dlg-main .dh { background: #d9534f; color: #fff; }
.fields { display: grid; grid-template-columns: 291px 124px 210px 124px; column-gap: 5.400px; row-gap: 5px; padding: 11px 0 0 17px; }
.f { height: 53px; box-shadow: 1px 2px 4px rgba(0,0,0,.55); padding: 2px 3px 0 2px; background: #fff; }
.f label { display: block; font-size: 11px; line-height: 15px; color: #808080; letter-spacing: -.42px; white-space: nowrap; height: 18px; }
.f:nth-child(n+2) label { letter-spacing: -.3px; }
.v { height: 30px; display: flex; align-items: center; padding: 1px 0 0 7px; font: 14px/18px "DejaVu Sans", sans-serif; letter-spacing: -.1px; }
.off { padding-left: 2px; margin-left: 1px; background: repeating-linear-gradient(135deg, #d9d9d9 0 2px, #cfcfcf 2px 3px); }
.dd { margin-left: auto; width: 16px; height: 27px; background: #dedcda; border: 1px solid #f4f4f4; border-right: 2px solid #777; border-bottom: 2px solid #777; display: grid; place-items: center; flex: none; margin-top: -3px; }
.dd::after { content: ""; border: 3px solid transparent; border-top: 4px solid #000; border-bottom: 0; }
.sum { grid-column: 3 / 5; color: #777; line-height: 14px; padding-top: 1px; height: 57px; white-space: nowrap; letter-spacing: -.1px; }
.sum .s1 { font-size: 11px; height: 15px; letter-spacing: -.3px; }
.sum b { letter-spacing: .3px; }
.sum .s3 { letter-spacing: -.02px; }
.sum .s4 b { letter-spacing: .9px; }
.chk { display: flex; align-items: center; padding-left: 18px; height: 28px; white-space: nowrap; letter-spacing: 0; }
.chk span { padding: 8px 0 0 4px; }
.chk + .chk { letter-spacing: -.1px; }
.cb { width: 16px; height: 16px; border-radius: 4px; background: linear-gradient(#f5f5f5, #dedddb); box-shadow: 0 1px 2px #777; }
.fields + .chk { margin-top: 3px; }
.dash { margin: 15px 12px 0; border-top: 1px dashed #aaa; }
.chk.green { padding-left: 13px; height: 24px; margin-top: 15px; color: #0c5c10; letter-spacing: -.12px; }
.green span { padding-top: 7px; }
.green svg.note { width: 10px; height: 10px; margin: 8px 0 0 7px; }
.tb { margin: 1px 12px 0; border: 1px solid #8c8c8c; height: 107px; background: #e3e3e3; }
.tr { position: relative; height: 36px; display: grid; grid-template-columns: 161px 158px 85px 109px 153px 84px; column-gap: 4px; padding: 2px; }
.th { height: 34px; background: #adadad; padding: 0; column-gap: 0; grid-template-columns: 165px 162px 89px 113px 157px 88px; color: #fff; font-weight: 700; font-size: 13px; line-height: 32px; letter-spacing: 0; }
.th span { padding-left: 7px; border-right: 1px solid #8c8c8c; white-space: nowrap; position: relative; }
.th .wide { letter-spacing: .4px; }
.th span:last-child { border: 0; }
.th .pix { width: 156px; height: 33px; }
.in { height: 32px; background: #fff; border: 1px solid #aaa; padding: 1px 0 0 2px; font: 14px/28px "DejaVu Sans", sans-serif; letter-spacing: .1px; white-space: nowrap; }
.y { background: #ffffcc; }
.ro { background: #e8e8e8; }
.se { display: flex; height: 31px; padding-left: 6px; }
.se em { flex: 1; overflow: hidden; min-width: 0; }
.se .dd { margin-top: 0; height: 26px; }
.foc { background: #ffffcc; padding-left: 2px; }
.foc em { outline: 1px dotted #000; outline-offset: -1px; padding-left: 4px; height: 17px; line-height: 21px; margin: 4px 2px 0 0; overflow: visible; }
.acts { margin-top: 12px; border-top: 1px dashed #777; padding: 10px 17px 0; display: flex; justify-content: flex-end; gap: 5px; }
.acts span { height: 33px; line-height: 33px; text-align: center; border-radius: 5px; color: #fff; font-weight: 700; letter-spacing: .3px; background: repeating-linear-gradient(135deg, #8d8d8d 0 2px, #868686 2px 3px); }
.a1 { width: 135px; }
.a2 { width: 83px; }

/* desktop panel */
.taskbar { height: 35px; flex: none; background: linear-gradient(#8180b0, #8582bd 30%, #8886c2); border-top: 1px solid #aaa4c4; display: flex; }
.launch { width: 436px; display: flex; align-items: center; padding-left: 0; }
.launch svg { width: 30px; height: 30px; margin-left: 6px; }
.launch svg:first-child { margin-left: 1px; }
.lg { color: #dedede; --hole: #8683bb; }
.tasks { display: flex; width: 747px; padding-top: 4px; }
.tasks span { width: 83px; height: 26px; display: flex; align-items: center; gap: 4px; padding-left: 4px; }
.tasks svg { width: 15px; height: 15px; }
.tasks em { width: 48px; overflow: hidden; white-space: nowrap; letter-spacing: -.15px; -webkit-mask: linear-gradient(90deg, #000 45%, transparent); mask: linear-gradient(90deg, #000 45%, transparent); }
.tasks .cur { background: #9c99cc; border: 1px solid #b5b3da; border-radius: 2px; width: 77px; margin: 0 7px 0 -1px; }
.dim { opacity: .65; }
.tray { display: flex; align-items: center; width: 282px; }
.tray .pg { width: 28px; height: 20px; margin: 0 6px 0 2px; }
.tray span { width: 28.200px; display: grid; place-items: center; }
.tray svg { width: 20px; height: 20px; }
.tray .s16 { width: 15px; height: 16px; }
.tray .s24 { width: 24px; height: 22px; }
.tray .up { width: 20px; }
.tray .up svg { width: 8px; height: 6px; }
.clock { width: 113px; text-align: center; color: #fff; white-space: nowrap; }
.clock div { font: 25px/23px "Noto Sans", sans-serif; letter-spacing: .1px; text-shadow: 1px 1px 1px #444; }
.clock p { font-size: 9.500px; line-height: 11px; color: #151525; letter-spacing: .1px; }
.cashew { width: 20px; height: 34px; margin-left: 2px; }
```
